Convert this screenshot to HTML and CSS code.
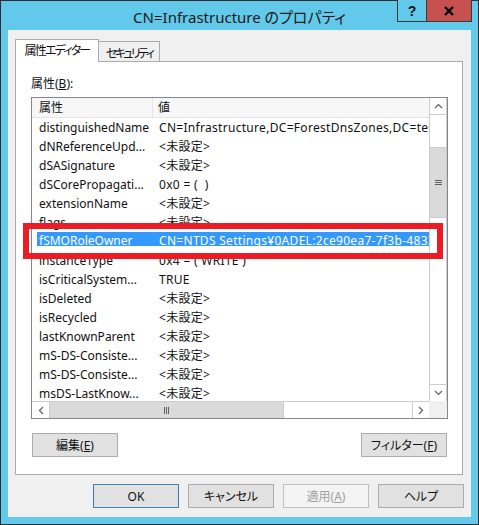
FILE: index.html
```html
<!DOCTYPE html>
<html lang="ja">
<head>
  <meta charset="UTF-8" />
  <title>CN=Infrastructure のプロパティ</title>
  <link rel="stylesheet" href="styles.css">
</head>
<body>
  <div class="window">
    <div class="titlebar">
      <span class="title">CN=Infrastructure のプロパティ</span>
      <div class="caption-buttons">
        <span class="cap-btn help">?</span>
        <span class="cap-btn close">
          <svg width="12" height="10" viewBox="0 0 12 10"><path d="M2 1 L10 9 M10 1 L2 9" stroke="#000" stroke-width="2.4" fill="none"/></svg>
        </span>
      </div>
    </div>

    <div class="client">
      <div class="tabs">
        <div class="tab active">属性エディター</div>
        <div class="tab">セキュリティ</div>
      </div>

      <div class="tab-panel">
        <div class="field-label">属性(<u>B</u>):</div>

        <div class="listbox">
          <div class="list-main">
            <div class="list-view">
              <div class="list-header">
                <span class="head-name">属性</span>
                <span class="head-value">値</span>
              </div>
              <div class="list-rows">
                <div class="row"><span class="name">distinguishedName</span><span class="value">CN=Infrastructure,DC=ForestDnsZones,DC=test,DC=local</span></div>
                <div class="row"><span class="name">dNReferenceUpd...</span><span class="value">&lt;未設定&gt;</span></div>
                <div class="row"><span class="name">dSASignature</span><span class="value">&lt;未設定&gt;</span></div>
                <div class="row"><span class="name">dSCorePropagati...</span><span class="value">0x0 = (&nbsp; )</span></div>
                <div class="row"><span class="name">extensionName</span><span class="value">&lt;未設定&gt;</span></div>
                <div class="row"><span class="name">flags</span><span class="value">&lt;未設定&gt;</span></div>
                <div class="row selected"><span class="name">fSMORoleOwner</span><span class="value">CN=NTDS Settings¥0ADEL:2ce90ea7-7f3b-4833-9a1c-5e7d</span></div>
                <div class="row"><span class="name">instanceType</span><span class="value">0x4 = ( WRITE )</span></div>
                <div class="row"><span class="name">isCriticalSystem...</span><span class="value">TRUE</span></div>
                <div class="row"><span class="name">isDeleted</span><span class="value">&lt;未設定&gt;</span></div>
                <div class="row"><span class="name">isRecycled</span><span class="value">&lt;未設定&gt;</span></div>
                <div class="row"><span class="name">lastKnownParent</span><span class="value">&lt;未設定&gt;</span></div>
                <div class="row"><span class="name">mS-DS-Consiste...</span><span class="value">&lt;未設定&gt;</span></div>
                <div class="row"><span class="name">mS-DS-Consiste...</span><span class="value">&lt;未設定&gt;</span></div>
                <div class="row"><span class="name">msDS-LastKnow...</span><span class="value">&lt;未設定&gt;</span></div>
              </div>
            </div>

            <div class="vscroll">
              <div class="sb-btn sb-up">
                <svg width="9" height="6" viewBox="0 0 9 6"><path d="M1 5 L4.5 1.5 L8 5" stroke="#606060" stroke-width="1.2" fill="none"/></svg>
              </div>
              <div class="sb-track top-track"></div>
              <div class="sb-thumb v-thumb"><span class="grip"></span></div>
              <div class="sb-track fill"></div>
              <div class="sb-btn sb-down">
                <svg width="9" height="6" viewBox="0 0 9 6"><path d="M1 1 L4.5 4.5 L8 1" stroke="#606060" stroke-width="1.2" fill="none"/></svg>
              </div>
            </div>
          </div>

          <div class="hscroll-row">
            <div class="hscroll">
              <div class="sb-btn sb-left">
                <svg width="6" height="9" viewBox="0 0 6 9"><path d="M5 1 L1.5 4.5 L5 8" stroke="#606060" stroke-width="1.2" fill="none"/></svg>
              </div>
              <div class="sb-thumb h-thumb"><span class="grip-h"></span></div>
              <div class="sb-track fill"></div>
              <div class="sb-btn sb-right">
                <svg width="6" height="9" viewBox="0 0 6 9"><path d="M1 1 L4.5 4.5 L1 8" stroke="#606060" stroke-width="1.2" fill="none"/></svg>
              </div>
            </div>
            <div class="corner"></div>
          </div>
        </div>

        <div class="panel-buttons">
          <button class="btn">編集(<u>E</u>)</button>
          <button class="btn">フィルター(<u>F</u>)</button>
        </div>
      </div>

      <div class="dialog-buttons">
        <button class="btn default">OK</button>
        <button class="btn">キャンセル</button>
        <button class="btn" disabled>適用(<u>A</u>)</button>
        <button class="btn">ヘルプ</button>
      </div>
    </div>

    <!-- 注記の赤枠 -->
    <div class="annotation"></div>
  </div>
</body>
</html>
```

FILE: styles.css
```css
* {
  margin: 0;
  padding: 0;
  box-sizing: border-box;
}

body {
  font-family: "Noto Sans", "Noto Sans CJK JP", sans-serif;
  font-size: 12px;
  font-feature-settings: "palt";
  color: #111;
  background: #62c9ea;
}

.window {
  position: relative;
  width: 479px;
  height: 525px;
  border: 1px solid #2e2e2e;
  background: #62c9ea;
  padding: 0 7px 7px 7px;
}

.titlebar {
  height: 29px;
  display: flex;
  align-items: center;
  justify-content: center;
}

.title {
  font-size: 15px;
  color: #1a1a1a;
  padding-top: 1px;
}

.caption-buttons {
  position: absolute;
  top: -1px;
  right: 6px;
  display: flex;
}

.cap-btn {
  height: 22px;
  display: flex;
  align-items: center;
  justify-content: center;
  border: 1px solid #3a3a3a;
  border-top: none;
}

.help {
  width: 29px;
  border-right: none;
  font-weight: bold;
  font-size: 14px;
  font-family: "Liberation Sans", sans-serif;
  background: #62c9ea;
}

.close {
  width: 46px;
  background: #c75050;
}

.client {
  height: 487px;
  background: #f0f0f0;
  padding: 9px 8px 0 7px;
}

.tabs {
  height: 22px;
  display: flex;
  align-items: flex-end;
}

.tab {
  height: 20px;
  display: flex;
  align-items: center;
  justify-content: center;
  white-space: nowrap;
  border: 1px solid #acacac;
  border-bottom: none;
  background: #f0f0f0;
  overflow: hidden;
}

.tab.active {
  width: 84px;
  height: 23px;
  margin-bottom: -1px;
  background: #fff;
  position: relative;
  z-index: 1;
  padding-bottom: 2px;
  letter-spacing: -1.8px;
}

.tab:not(.active) {
  width: 61px;
  border-left: none;
  padding-top: 2px;
  letter-spacing: -2.6px;
}

.tab-panel {
  height: 414px;
  background: #fff;
  border: 1px solid #acacac;
  padding: 14px 15px 0 15px;
}

.field-label {
  height: 16px;
  line-height: 16px;
  margin-bottom: 5px;
}

.listbox {
  width: 417px;
  height: 322px;
  border: 1px solid #828790;
  background: #fff;
}

.list-main {
  display: flex;
  height: 303px;
}

.list-view {
  width: 397px;
  overflow: hidden;
}

.list-header {
  display: flex;
  height: 20px;
  background: #f7f7f7;
  border-bottom: 1px solid #e5e5e5;
  line-height: 19px;
}

.head-name {
  width: 121px;
  padding-left: 7px;
  border-right: 1px solid #e5e5e5;
}

.head-value {
  padding-left: 5px;
}

.list-rows {
  height: 283px;
  overflow: hidden;
}

.row {
  display: flex;
  height: 19px;
  line-height: 19px;
  padding-left: 7px;
  white-space: nowrap;
}

.row .name {
  width: 120px;
  flex: none;
}

.row .value {
  flex: none;
  letter-spacing: 0.3px;
}

.row.selected {
  margin-left: 5px;
  padding-left: 2px;
  color: #fff;
  background: linear-gradient(#3399ff, #3399ff) 0 -2px / 100% 16px no-repeat;
  line-height: 17px;
}

.vscroll {
  width: 18px;
  display: flex;
  flex-direction: column;
  border-left: 1px solid #cdcdcd;
  border-right: 1px solid #cdcdcd;
}

.sb-btn {
  display: flex;
  align-items: center;
  justify-content: center;
  background: #fff;
}

.sb-up {
  height: 17px;
  border-bottom: 1px solid #cdcdcd;
}

.sb-down {
  height: 17px;
  border-top: 1px solid #cdcdcd;
}

.top-track {
  height: 32px;
}

.sb-track.fill {
  flex: 1;
}

.sb-thumb {
  background: #dadada;
  display: flex;
  align-items: center;
  justify-content: center;
}

.v-thumb {
  height: 71px;
  border-top: 1px solid #cdcdcd;
  border-bottom: 1px solid #cdcdcd;
}

.grip {
  width: 7px;
  height: 5px;
  border-top: 1px solid #606060;
  border-bottom: 1px solid #606060;
  background: linear-gradient(#606060, #606060) 0 1px / 100% 1px no-repeat;
}

.hscroll-row {
  display: flex;
  height: 17px;
}

.hscroll {
  width: 397px;
  display: flex;
  border-top: 1px solid #cdcdcd;
}

.sb-left {
  width: 18px;
  border-right: 1px solid #cdcdcd;
}

.sb-right {
  width: 17px;
  border-left: 1px solid #cdcdcd;
}

.h-thumb {
  width: 234px;
  border-right: 1px solid #cdcdcd;
}

.grip-h {
  width: 5px;
  height: 7px;
  border-left: 1px solid #606060;
  border-right: 1px solid #606060;
  background: linear-gradient(#606060, #606060) 1px 0 / 1px 100% no-repeat;
}

.corner {
  flex: 1;
  background: #f0f0f0;
}

.panel-buttons {
  display: flex;
  justify-content: space-between;
  margin-top: 14px;
  padding-left: 1px;
}

.btn {
  width: 86px;
  height: 24px;
  font-family: inherit;
  font-size: 12px;
  font-feature-settings: "palt";
  color: #111;
  background: #e1e1e1;
  border: 1px solid #adadad;
}

.btn.default {
  border-color: #3c7fb1;
}

.btn:disabled {
  background: #f4f4f4;
  border-color: #bfbfbf;
  color: #a0a0a0;
}

.dialog-buttons {
  display: flex;
  justify-content: flex-end;
  gap: 9px;
  margin-top: 9px;
  margin-right: -1px;
}

.annotation {
  position: absolute;
  left: 22px;
  top: 222px;
  width: 420px;
  height: 36px;
  border: 6px solid #ed1c24;
}
```
